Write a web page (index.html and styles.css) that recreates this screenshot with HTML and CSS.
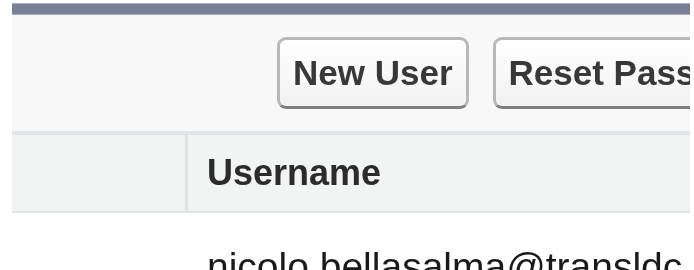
FILE: index.html
```html
<!DOCTYPE html>
<html lang="en">
<head>
<meta charset="utf-8">
<title>Users</title>
<link rel="stylesheet" href="styles.css">
</head>
<body>
<div class="frame">
  <div class="bar"></div>
  <div class="toolbar">
    <button class="btn" type="button">New User</button>
    <button class="btn" type="button">Reset Password(s)</button>
  </div>
  <div class="table">
    <div class="thead">
      <div class="cell action"></div>
      <div class="cell head">Username</div>
    </div>
    <div class="trow">
      <div class="cell action"></div>
      <div class="cell data">nicolo.bellasalma@transldc.com</div>
    </div>
  </div>
</div>
</body>
</html>
```

FILE: styles.css
```css
html, body {
  margin: 0;
  padding: 0;
  background: #ffffff;
}

body {
  padding-top: 3px;
  font-family: "Liberation Sans", Arial, sans-serif;
}

.frame {
  margin: 0 4px 0 12px;
  height: 267px;
  overflow: hidden;
  background: #f8f8f8;
  filter: blur(0.7px);
}

.bar {
  height: 12px;
  box-sizing: border-box;
  background: #798096;
  border-top: 1px solid #a9aebd;
  border-bottom: 1px solid #a9aebd;
}

.toolbar {
  display: flex;
  gap: 24px;
  padding: 22px 0 22px 265px;
  white-space: nowrap;
}

.btn {
  flex: none;
  height: 72px;
  box-sizing: border-box;
  padding: 0 13px;
  font-family: "Liberation Sans", Arial, sans-serif;
  font-weight: bold;
  font-size: 35px;
  color: #383838;
  background: linear-gradient(#ffffff, #f2f2f2);
  border: 3px solid #b8b8b8;
  border-bottom-color: #7f7f7f;
  border-radius: 9px;
}

.table {
  background: #ffffff;
}

.thead {
  display: flex;
  height: 82px;
  box-sizing: border-box;
  background: #f2f3f3;
  border-top: 4px solid #e1e4e6;
  border-bottom: 2px solid #e3e6e8;
}

.trow {
  display: flex;
  background: #ffffff;
}

.cell {
  display: flex;
  align-items: center;
  white-space: nowrap;
}

.action {
  flex: none;
  width: 173px;
}

.thead .action {
  border-right: 3px solid #dfe2e4;
}

.head {
  padding-left: 19px;
  font-weight: bold;
  font-size: 36px;
  color: #2b2b2b;
}

.data {
  padding: 32px 0 0 22px;
  font-size: 39px;
  color: #1a1a1a;
}
```
